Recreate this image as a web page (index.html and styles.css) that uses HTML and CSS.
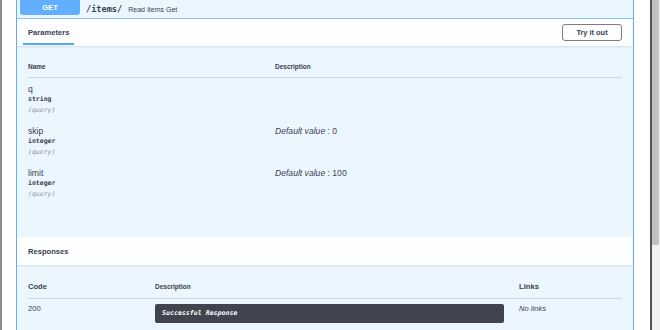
FILE: index.html
```html
<!DOCTYPE html>
<html lang="en">
<head>
  <meta charset="UTF-8" />
  <meta name="viewport" content="width=device-width, initial-scale=1.0" />
  <title>Read Items Get</title>
  <link rel="stylesheet" href="styles.css">
</head>

<body>
  <div class="page">
    <div class="opblock">
      <div class="summary">
        <span class="method">GET</span>
        <span class="path">/items/</span>
        <span class="summary-desc">Read Items Get</span>
      </div>

      <!-- Parameters -->
      <div class="section-header">
        <div class="tab"><h4>Parameters</h4></div>
        <button class="try-out">Try it out</button>
      </div>
      <div class="params">
        <table>
          <thead>
            <tr>
              <th class="col-name">Name</th>
              <th>Description</th>
            </tr>
          </thead>
          <tbody>
            <tr>
              <td>
                <div class="param-name">q</div>
                <div class="param-type">string</div>
                <div class="param-in">(query)</div>
              </td>
              <td></td>
            </tr>
            <tr>
              <td>
                <div class="param-name">skip</div>
                <div class="param-type">integer</div>
                <div class="param-in">(query)</div>
              </td>
              <td><div class="param-default"><i>Default value</i> : 0</div></td>
            </tr>
            <tr>
              <td>
                <div class="param-name">limit</div>
                <div class="param-type">integer</div>
                <div class="param-in">(query)</div>
              </td>
              <td><div class="param-default"><i>Default value</i> : 100</div></td>
            </tr>
          </tbody>
        </table>
      </div>

      <!-- Responses -->
      <div class="section-header responses-header">
        <h4>Responses</h4>
      </div>
      <div class="responses">
        <table>
          <thead>
            <tr>
              <th class="col-code">Code</th>
              <th class="col-desc">Description</th>
              <th class="col-links">Links</th>
            </tr>
          </thead>
          <tbody>
            <tr>
              <td class="status">200</td>
              <td><div class="markdown">Successful Response</div></td>
              <td class="no-links">No links</td>
            </tr>
          </tbody>
        </table>
      </div>
    </div>
  </div>

  <div class="scrollbar"><div class="thumb"></div></div>
</body>
</html>
```

FILE: styles.css
```css
html, body {
  margin: 0;
  padding: 0;
}

body {
  display: flex;
  height: 330px;
  overflow: hidden;
  background: #fff;
  border-left: 2px solid #8c8c8c;
  font-family: "Liberation Sans", Arial, sans-serif;
  color: #3b4151;
}

.page {
  flex: 1;
  padding: 0 16px 0 14px;
}

.opblock {
  background: #ecf6ff;
  border: 1px solid #61affe;
  border-top: none;
  height: 400px;
}

.summary {
  display: flex;
  align-items: center;
  height: 18px;
  padding: 0 3px;
  border-bottom: 1px solid #8ec4f8;
}

.method {
  align-self: flex-start;
  width: 60px;
  height: 15px;
  line-height: 15px;
  text-align: center;
  background: #61affe;
  color: #fff;
  font-size: 7.6px;
  font-weight: bold;
  border-radius: 0 0 3px 3px;
}

.path {
  margin-left: 6px;
  font-family: "DejaVu Sans Mono", monospace;
  font-weight: bold;
  font-size: 8.6px;
}

.summary-desc {
  margin-left: 6px;
  font-size: 7px;
}

/* Section headers */
.section-header {
  display: flex;
  align-items: center;
  justify-content: space-between;
  height: 27px;
  padding: 0 11px;
  background: rgba(255,255,255,0.85);
  box-shadow: 0 1px 2px rgba(0,0,0,0.1);
}

.section-header h4 {
  margin: 0;
  font-size: 7.6px;
  font-weight: bold;
}

.tab {
  align-self: stretch;
  display: flex;
  align-items: center;
  position: relative;
}

.tab::after {
  content: '';
  position: absolute;
  left: -5px;
  right: -5px;
  bottom: 1px;
  height: 2px;
  background: #55a8f6;
}

.try-out {
  width: 60px;
  height: 17px;
  padding: 0;
  background: transparent;
  border: 1px solid #7d7d7d;
  border-radius: 3px;
  font-family: "Liberation Sans", Arial, sans-serif;
  font-size: 7.4px;
  font-weight: bold;
  color: #3b4151;
}

/* Tables */
table {
  width: 100%;
  border-collapse: collapse;
}

th {
  text-align: left;
  font-size: 6.5px;
  font-weight: bold;
  line-height: 8px;
  padding: 6px 0;
  border-bottom: 1px solid #cdd7e2;
}

td {
  padding: 5px 0;
  vertical-align: top;
}

.params {
  padding: 11px 11px 33px;
}

.params td {
  padding: 6px 0 4px;
}

.col-name {
  width: 247px;
}

.param-name {
  font-size: 8.6px;
  line-height: 10px;
}

.param-type {
  font-family: "DejaVu Sans Mono", monospace;
  font-weight: bold;
  font-size: 6.5px;
  line-height: 11px;
}

.param-in {
  font-family: "DejaVu Sans Mono", monospace;
  font-style: italic;
  font-size: 6.5px;
  line-height: 11px;
  color: #8a8f99;
}

.param-default {
  font-size: 8.6px;
  line-height: 10px;
}

.responses-header {
  height: 28px;
}

.responses {
  padding: 11px 11px 0;
}

.responses th {
  line-height: 10px;
}

.col-code {
  width: 127px;
  font-size: 7.6px;
}

.col-desc {
  width: 364px;
}

.col-links {
  font-size: 7.7px;
}

.status,
.no-links {
  font-size: 7.6px;
  line-height: 10px;
}

.no-links {
  font-style: italic;
}

.markdown {
  width: 349px;
  box-sizing: border-box;
  height: 19px;
  line-height: 19px;
  padding: 0 7px;
  background: #41444e;
  border-radius: 2px;
  color: #fff;
  font-family: "DejaVu Sans Mono", monospace;
  font-style: italic;
  font-weight: bold;
  font-size: 6.6px;
}

/* Scrollbar */
.scrollbar {
  width: 8px;
  border-left: 2px solid #555;
  background: #f1f1f1;
}

.thumb {
  height: 245px;
  margin: 0 1px 0 0;
  background: #c1c1c1;
}
```
